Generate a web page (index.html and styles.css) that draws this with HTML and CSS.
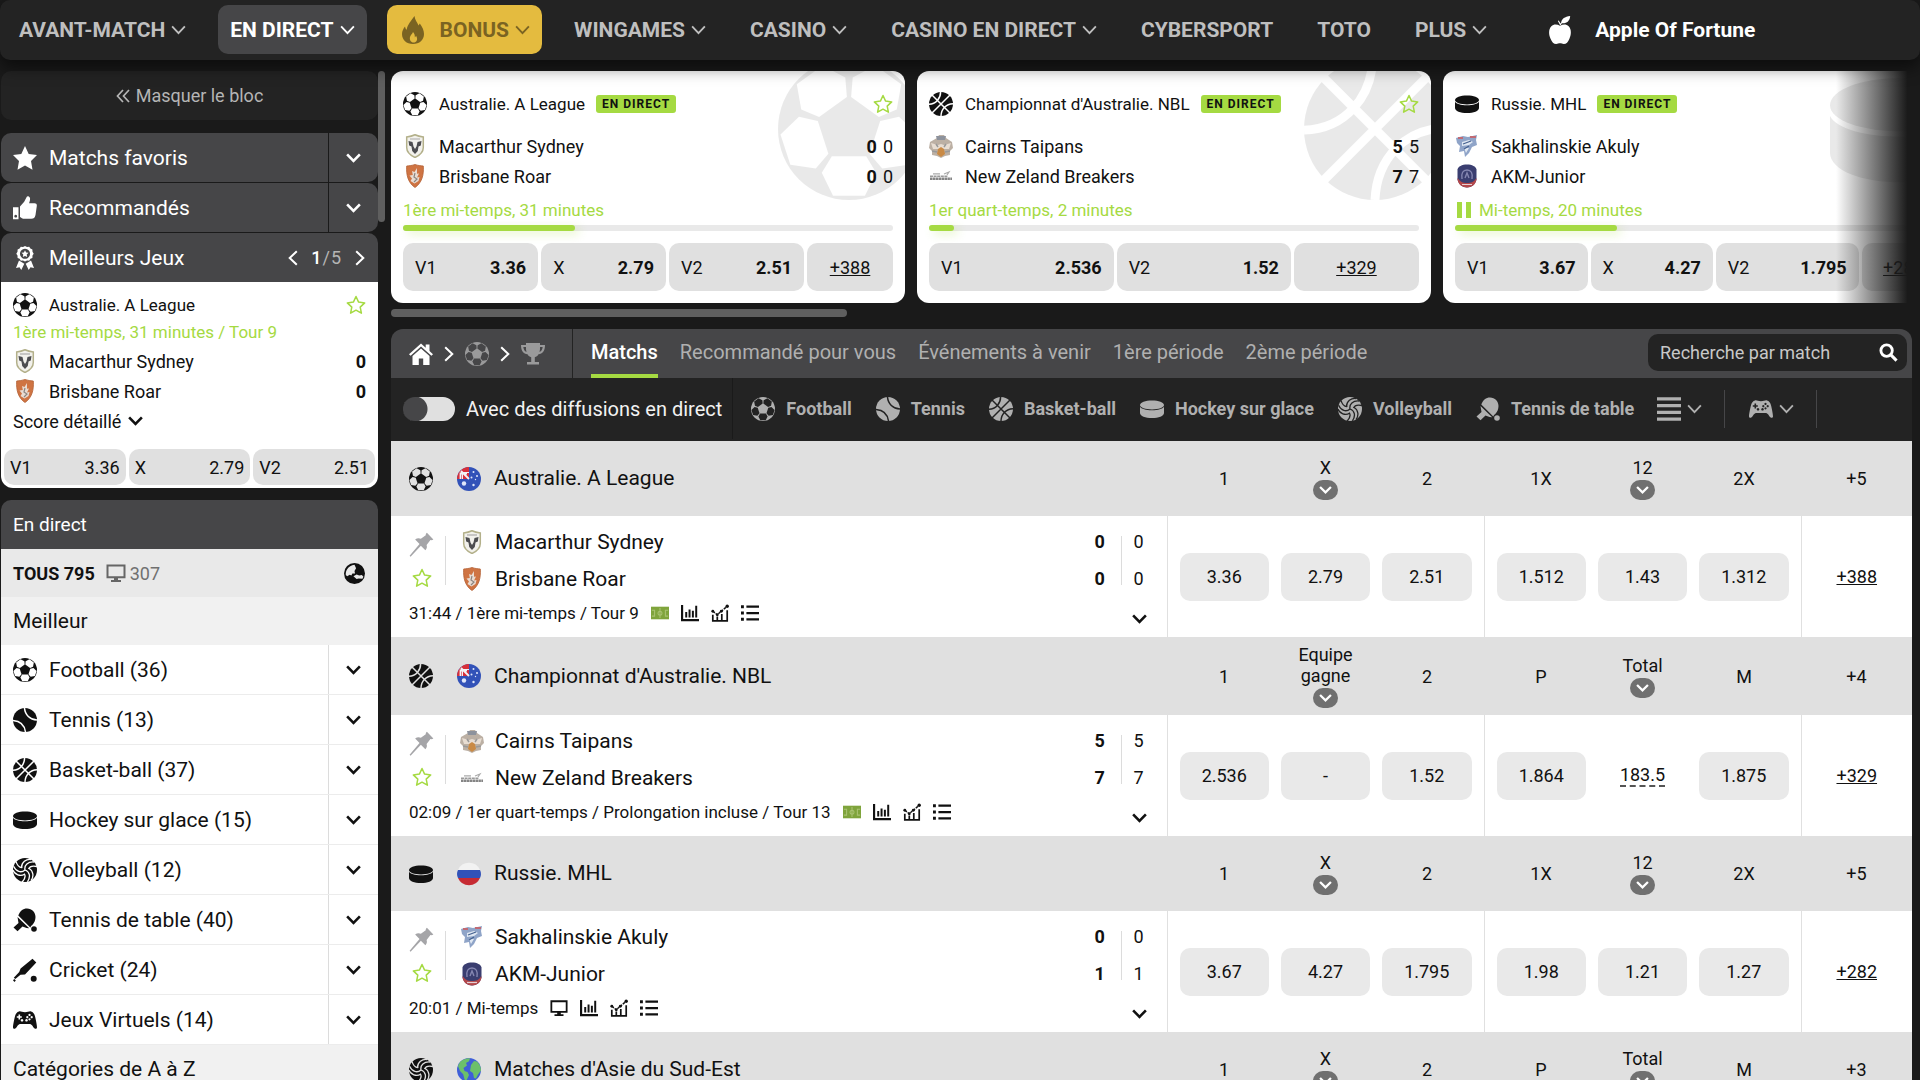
FILE: index.html
```html
<!DOCTYPE html>
<html lang="fr">
<head>
    <meta charset="UTF-8">
    <meta name="viewport" content="width=device-width, initial-scale=1">
    <title>Paris en direct</title>
    <link rel="stylesheet" href="styles.css">
</head>
<body>

<!-- Icon sprite -->
<svg class="sprite" width="0" height="0" aria-hidden="true">
    <mask id="m-football"><circle cx="12" cy="12" r="12" fill="#fff"/>
        <g fill="#000">
            <path d="M9.1 16.6h5.8l1.7 2.8-1.9 3.9H9.3l-1.9-3.9z"/>
            <path d="M9.1 16.6h5.8l1.7 2.8-1.9 3.9H9.3l-1.9-3.9z" transform="rotate(72 12 12)"/>
            <path d="M9.1 16.6h5.8l1.7 2.8-1.9 3.9H9.3l-1.9-3.9z" transform="rotate(144 12 12)"/>
            <path d="M9.1 16.6h5.8l1.7 2.8-1.9 3.9H9.3l-1.9-3.9z" transform="rotate(216 12 12)"/>
            <path d="M9.1 16.6h5.8l1.7 2.8-1.9 3.9H9.3l-1.9-3.9z" transform="rotate(288 12 12)"/>
        </g>
    </mask>
    <mask id="m-basket"><circle cx="12" cy="12" r="12" fill="#fff"/>
        <path d="M3 3l18 18M21 3L3 21M11.6 0C11.5 6.500 7 12 0 12.200M24 11.800C17 12 12.300 17 12 24" fill="none" stroke="#000" stroke-width="1.500"/>
    </mask>
    <mask id="m-tennis"><circle cx="12" cy="12" r="12" fill="#fff"/>
        <path d="M11.500 0C12 7 17 11.500 24 12M0 12.500C7 13 11.500 17 12.500 24" fill="none" stroke="#000" stroke-width="1.500"/>
    </mask>
    <mask id="m-volley"><circle cx="12" cy="12" r="12" fill="#fff"/>
        <g fill="none" stroke="#000" stroke-width="1.300">
            <path d="M12 12C11 7 15 3.500 21 4M8.500 9.500C8.500 4.500 13 .8 18 1.500M15.500 11C16.500 8.500 19.500 7.500 24 8.500"/>
            <path d="M12 12C11 7 15 3.500 21 4M8.500 9.500C8.500 4.500 13 .8 18 1.500M15.500 11C16.500 8.500 19.500 7.500 24 8.500" transform="rotate(120 12 12)"/>
            <path d="M12 12C11 7 15 3.500 21 4M8.500 9.500C8.500 4.500 13 .8 18 1.500M15.500 11C16.500 8.500 19.500 7.500 24 8.500" transform="rotate(240 12 12)"/>
        </g>
    </mask>
    <symbol id="football" viewBox="0 0 24 24"><rect width="24" height="24" fill="currentColor" mask="url(#m-football)"/></symbol>
    <symbol id="basket" viewBox="0 0 24 24"><rect width="24" height="24" fill="currentColor" mask="url(#m-basket)"/></symbol>
    <symbol id="tennis" viewBox="0 0 24 24"><rect width="24" height="24" fill="currentColor" mask="url(#m-tennis)"/></symbol>
    <symbol id="volley" viewBox="0 0 24 24"><rect width="24" height="24" fill="currentColor" mask="url(#m-volley)"/></symbol>
    <symbol id="puck" viewBox="0 0 24 24"><path d="M0 8c0-2.600 5.400-4.600 12-4.600S24 5.400 24 8s-5.400 4.400-12 4.400S0 10.600 0 8z" fill="currentColor"/><path d="M0 9.800c1.200 2.200 6 3.500 12 3.500s10.800-1.300 12-3.500V16c0 3-5.400 5-12 5S0 19 0 16z" fill="currentColor"/></symbol>
    <symbol id="paddle" viewBox="0 0 24 24"><path d="M5.300 7.500C7 3 10 .5 14 .5c5 0 8.500 3.600 8.500 8.600 0 3.200-1.200 6-3.200 8a4 4 0 0 0-2 2.400z" fill="currentColor"/><path d="M4.500 9l11.700 11.300-2.700-.3-4-1.500-5 4.700L.5 19.500l5-4.500z" fill="currentColor"/><circle cx="21" cy="21" r="2.800" fill="currentColor"/></symbol>
    <symbol id="cricket" viewBox="0 0 24 24"><path d="M19.500.8l3.800 3.800L12 16.500l-4.500.2L2.300 21 .8 19.800 6.200 14l1.400-3.600z" fill="currentColor"/><path d="M0 22.300l1.300-1.300 1.500 1.500L1.500 24z" fill="currentColor"/><circle cx="20.700" cy="20.700" r="3" fill="currentColor"/></symbol>
    <symbol id="gamepad" viewBox="0 0 24 24"><path fill-rule="evenodd" d="M6 3.500c1.500-.7 3 .8 6 .8s4.500-1.500 6-.8c2 .5 3.500 2 4.200 5.500.9 4 1.800 8.500 1.800 10.200 0 1.300-1 1.800-2 1.500-1.700-.6-3-4.700-5-4.700H7c-2 0-3.300 4.100-5 4.700-1 .3-2-.2-2-1.500C0 17.500.9 13 1.800 9 2.500 5.500 4 4 6 3.500zM5.500 6.500v1.700H3.800v1.600h1.700v1.700h1.600V9.800h1.700V8.200H7.100V6.500zM16.500 5.800a1.100 1.100 0 1 0 .01 0zM14.300 8a1.100 1.100 0 1 0 .01 0zM18.700 8a1.100 1.100 0 1 0 .01 0zM16.500 10.200a1.100 1.100 0 1 0 .01 0zM9 11a1.300 1.300 0 1 0 .01 0zM13.500 11a1.300 1.300 0 1 0 .01 0z" fill="currentColor"/></symbol>
    <symbol id="chev" viewBox="0 0 16 10"><path d="M1.200 1.200L8 8.300l6.800-7.100" fill="none" stroke="currentColor" stroke-width="2"/></symbol>
    <symbol id="chev-bold" viewBox="0 0 16 10"><path d="M1.200 1.200L8 8l6.800-6.800" fill="none" stroke="currentColor" stroke-width="2.800"/></symbol>
    <symbol id="chev-right" viewBox="0 0 10 16"><path d="M1.200 1.200L8.300 8l-7.100 6.800" fill="none" stroke="currentColor" stroke-width="2"/></symbol>
    <symbol id="chev-left" viewBox="0 0 10 16"><path d="M8.800 1.200L1.700 8l7.100 6.800" fill="none" stroke="currentColor" stroke-width="2"/></symbol>
    <symbol id="chev-double" viewBox="0 0 14 14"><path d="M7 1L1.500 7 7 13M13 1L7.500 7l5.500 6" fill="none" stroke="currentColor" stroke-width="1.700"/></symbol>
    <symbol id="star-o" viewBox="0 0 20 20"><path d="M10 1.500l2.600 5.600 6.100.8-4.500 4.200 1.200 6.100L10 15.200l-5.400 3 1.200-6.100L1.300 7.900l6.100-.8z" fill="none" stroke="currentColor" stroke-width="1.500" stroke-linejoin="round"/></symbol>
    <symbol id="star" viewBox="0 0 24 24"><path d="M12 0l3.700 7.900 8.300 1.100-6 5.900 1.500 8.800L12 19.500l-7.500 4.200L6 14.900 0 9l8.300-1.100z" fill="currentColor"/></symbol>
    <symbol id="thumb" viewBox="0 0 24 24"><path d="M7 10.500l4.200-4.700L13.800.8c.4-1 2.600-.6 3.100 1 .4 1.400 0 3-.8 5.400h5.400c1.800 0 2.500 1 2.300 2.800L22.500 19c-.6 2.700-1.800 3.800-4.200 3.800h-6.500c-2.500 0-3.600-1.300-4.800-1.900z" fill="currentColor"/><path fill-rule="evenodd" d="M0 11.200h5.500v12H0zM2.700 18.800a1.400 1.400 0 1 0 .01 0z" fill="currentColor"/></symbol>
    <symbol id="medal" viewBox="0 0 24 24"><path d="M6 14.500L3 22l3.500-.8L8.300 24l3-6.200zM18 14.500l3 7.500-3.500-.8-1.800 2.800-3-6.200z" fill="currentColor"/><path fill-rule="evenodd" d="M12 0l2 1 2.200-.3 1.200 1.900 2 .9.100 2.300 1.200 1.900-1.200 1.900-.1 2.300-2 .9-1.200 1.900-2.200-.3-2 1-2-1-2.200.3-1.200-1.900-2-.9-.1-2.300-1.200-1.900 1.200-1.900.1-2.300 2-.9L7.800.7 10 1zM12 2.800a5 5 0 1 0 .01 0z" fill="currentColor"/><path d="M12 4.200l1.100 2.300 2.400.3-1.800 1.800.5 2.500-2.200-1.200-2.200 1.200.5-2.500-1.800-1.800 2.400-.3z" fill="currentColor"/></symbol>
    <symbol id="flame" viewBox="0 0 22 28"><path fill-rule="evenodd" d="M12.500 0c.5 4 2.500 6 4 9.500l1.300-2C20.500 11 22 14.500 22 18c0 6-4.500 10-11 10S0 24 0 18c0-3 1.500-5.500 3-7.500.3 1.600.8 2.500 1.700 3.200C5.500 8.500 9 5 12.500 0zM11 16c-.8 2.200-2.500 3-3 5-.7 3 1 5.500 3.500 5.500s4-2 3.500-4.500c-.2-1-.6-1.700-1-2.300-.3.900-.7 1.300-1.200 1.600C13 19.500 12.500 17.500 11 16z" fill="currentColor"/></symbol>
    <symbol id="apple" viewBox="0 0 26 33"><path d="M13 11.500C9.500 9.500 5.500 9.300 2.800 12-.8 15.700-.3 22 2 27c1.500 3.500 3.500 6 6.500 6 1.800 0 2.800-.8 4.500-.8s2.700.8 4.500.8c3 0 5-2.500 6.500-6 2.300-5 2.800-11.300-.8-15-2.700-2.700-6.700-2.500-10.200-.5z" fill="currentColor"/><path d="M14.500 7.500C15 3 18.500 1 25 0c-.5 6-4 9-9.800 8.500l-1.400 2.300-.8-.3-2.500-4.700 1-.5 2.200 3.500z" fill="currentColor"/></symbol>
    <symbol id="home" viewBox="0 0 24 24"><path d="M12 1.500L0 12.200l1.600 1.600L12 4.600l10.400 9.200 1.600-1.600-3.500-3.200V2.500h-3.800v3.200z" fill="currentColor"/><path d="M12 6.500l-8.500 7.600V23h6.300v-6.500h4.400V23h6.300v-8.900z" fill="currentColor"/></symbol>
    <symbol id="trophy" viewBox="0 0 24 24"><path fill-rule="evenodd" d="M5 1h14v2h5c0 6-2.500 9-6.500 9.300-1 1.700-2.200 2.600-3.700 3V20H18v2.500H6V20h4.200v-4.700c-1.500-.4-2.700-1.300-3.700-3C2.500 12 0 9 0 3h5zM2.300 5c.4 2.700 1.300 4.300 3.200 5C5 8.300 4.900 6.800 5 5zM19 5c.1 1.800 0 3.300-.5 5 1.900-.7 2.800-2.300 3.200-5z" fill="currentColor"/></symbol>
    <symbol id="search" viewBox="0 0 20 20"><circle cx="8" cy="8" r="6" fill="none" stroke="currentColor" stroke-width="3"/><path d="M12.500 12.500l6 6" stroke="currentColor" stroke-width="3.200"/></symbol>
    <symbol id="lines" viewBox="0 0 24 24"><path d="M0 1.800h24M0 8.600h24M0 15.400h24M0 22.200h24" stroke="currentColor" stroke-width="3.200"/></symbol>
    <symbol id="monitor" viewBox="0 0 20 20"><path d="M1.500 2.500h17v11.800h-17z" fill="none" stroke="currentColor" stroke-width="2"/><path d="M8 14h4v3h3v2H5v-2h3z" fill="currentColor"/></symbol>
    <symbol id="pin" viewBox="0 0 24 24"><path d="M17.200.6l6.200 6.600c-1.200.8-2.200.7-2.800.5l-3.700 4.800c.6 1.900.3 3.500-1.200 5l-4.300-4.400L1.500 23.700l-.9-.9 9.500-11.300-4.200-4.300c1.700-1.300 3.700-1.500 5.500-.7l4.700-3.400c-.1-1 .2-1.900 1.100-2.500z" fill="currentColor"/></symbol>
    <symbol id="field" viewBox="0 0 20 20"><path d="M0 3h20v14H0z" fill="#7fa43c"/><path d="M10 4.500v11M10 8a2.200 2.200 0 1 0 .01 0M1 7h3v6.500H1M19 7h-3v6.500h3" fill="none" stroke="#a9c272" stroke-width="1.200"/></symbol>
    <symbol id="bars" viewBox="0 0 20 20"><path d="M1.200 1v17H20" fill="none" stroke="currentColor" stroke-width="2.400"/><path d="M5.800 9v6M9.500 6v9M13.200 7.500V15M16.900 2v13" stroke="currentColor" stroke-width="2.200"/></symbol>
    <symbol id="trend" viewBox="0 0 20 20"><path d="M2 8l5 4 4.500-4L18 2.500" fill="none" stroke="currentColor" stroke-width="1.500" stroke-dasharray="3 1"/><path d="M2 12v6.800h16V7M7 14v5M12 11v8" fill="none" stroke="currentColor" stroke-width="1.900"/><circle cx="2" cy="8" r="1.600" fill="currentColor"/><circle cx="7" cy="12" r="1.600" fill="currentColor"/><circle cx="11.500" cy="8" r="1.600" fill="currentColor"/><circle cx="18" cy="2.500" r="1.900" fill="currentColor"/></symbol>
    <symbol id="list" viewBox="0 0 20 20"><path d="M0 3h3.200M0 10h3.200M0 17h3.200" stroke="currentColor" stroke-width="3.200"/><path d="M6 3h14M6 10h14M6 17h14" stroke="currentColor" stroke-width="2.500"/></symbol>
    <symbol id="globe" viewBox="0 0 20 20"><circle cx="10" cy="10" r="10" fill="currentColor"/><path d="M3 6C4.500 3.500 7 1.800 10 1.600L11.500 5 10 7.500l.5 2.500H8l-1 2-1.500-.8L3 12.500l-1.300-1C1.500 9.500 2 7.500 3 6zM9 12.500l3-1.500 2.500 1 2.500-.5 1.500 1.500-1 2-3.500-.3-2 .6z" fill="#e9e9e9"/></symbol>
    <symbol id="au" viewBox="0 0 24 24"><circle cx="12" cy="12" r="12" fill="#3252b8"/><path d="M12 0v12H0C0 6 5 0 12 0z" fill="#d8303a"/><path d="M4 4l8 8M3.500 12V6.500H10" stroke="#f2f2f5" stroke-width="1.800" fill="none"/><path d="M6 5.500h6M5.500 5v7" stroke="#f2f2f5" stroke-width="1"/><g fill="#dfe6fa"><circle cx="7" cy="16.500" r="2.200"/><circle cx="16.500" cy="5" r="1"/><circle cx="20" cy="9" r="1"/><circle cx="14.500" cy="10.500" r="1"/><circle cx="18.500" cy="12.500" r=".7"/><circle cx="16.500" cy="18" r="1.200"/></g></symbol>
    <symbol id="ru" viewBox="0 0 24 24"><path d="M1 8a12 12 0 0 1 22 0z" fill="#f2f2f2"/><path d="M1 8h22c1.300 2.700 1.300 5.300 0 8H1c-1.300-2.700-1.300-5.300 0-8z" fill="#3252b8"/><path d="M1 16h22a12 12 0 0 1-22 0z" fill="#c62b33"/></symbol>
    <symbol id="world" viewBox="0 0 24 24"><circle cx="12" cy="12" r="12" fill="#3f5fd8"/><path d="M3 4c3-3 7-4 10-3.800l-1 3L9 5l1 2.500L6.500 10l1 3 3 1 1.500 3-3 6.500C7 22 7 18 6 16l-3-3L1 8zM14 7l3-4 3 .5c3 3 4 6 4 9l-3 4-2 4-2-.5-1-5-3-2z" fill="#6cc06a"/></symbol>
    <symbol id="t-mac" viewBox="0 0 24 24"><path d="M12 .8c3 1.400 5.700 1.900 8.300 2.200v10.500c0 4.500-3.600 7.800-8.300 10-4.700-2.200-8.300-5.500-8.300-10V3C6.300 2.700 9 2.200 12 .8z" fill="#f2f1ec" stroke="#b3b08a" stroke-width="1.500"/><path d="M5.500 7l4 1 1 4.500L12 15l1.500-2.500 1-4.500 4-1-.7 4.500-2.300 1-.7 4.500L12 20l-2.800-3-.7-4.500-2.300-1z" fill="#4d4d50"/><path d="M7 5h10" stroke="#aaa" stroke-width="1.200"/></symbol>
    <symbol id="t-bri" viewBox="0 0 24 24"><path d="M12 .5c3 1 5.500 1.300 8.300 1.500.7 9-1.500 17-8.300 21.500C5.200 19 3 11 3.700 2c2.800-.2 5.300-.5 8.300-1.500z" fill="#cf7443" stroke="#b35f33" stroke-width=".8"/><path d="M14 4l-2.500 4L9 7l.8 4-3.300.5L9 14.500 7.500 17l4 2.500 4-2.500 1-4-2.500.5 2-4-2 .2z" fill="#e9dcd2"/><path d="M12 9l-1 4 3 2-3 3" stroke="#8c8580" stroke-width="1.200" fill="none"/></symbol>
    <symbol id="t-cai" viewBox="0 0 24 24"><path d="M8 4l2-3h5l2 3 6 4 1 6-3 3v4l-5 1-4 2-4-2-5-1v-4l-3-3 1-6z" fill="#bcb0a4"/><path d="M7 2h10l-1 4H8z" fill="#8d929c"/><path d="M2 9l7 2 3-1 3 1 7-2-2 6H4z" fill="#e8ddd2"/><path d="M9 15l3-2 3 2 1 5-4 3-4-3z" fill="#c98a45"/><path d="M3 17l5 1M21 17l-5 1M7 10l2 3M17 10l-2 3" stroke="#999" stroke-width="1.500"/></symbol>
    <symbol id="t-nzb" viewBox="0 0 24 24"><path d="M4 9.800h7M15 10l5-2-2 3" stroke="#aaa" stroke-width="1.200" fill="none"/><path d="M1 12.300h18" stroke="#9a9a9a" stroke-width="1.500" stroke-dasharray="3 .6"/><path d="M1 14.700h22" stroke="#858585" stroke-width="2.600" stroke-dasharray="2.500 .4"/></symbol>
    <symbol id="t-sak" viewBox="0 0 24 24"><path d="M1 4l7-2 5 1 9-2-1 5 1 5-5 2-3 6-4 4-1-6-5 1 1-6-3-3z" fill="#8fa4c8"/><path d="M7 8l7-2 4 2-4 3-7 1zM9 14l5 0-3 5z" fill="#dfe7f2"/><path d="M3 4l5 0M15 3l6 0" stroke="#c06a74" stroke-width="2"/><path d="M8 10l8-3M9 15l5-3" stroke="#43608f" stroke-width="1.200"/></symbol>
    <symbol id="t-akm" viewBox="0 0 24 24"><path d="M12 .5c5 0 9 2 9.500 5v10c-1 5-5 8-9.500 8s-8.500-3-9.500-8v-10C3 2.500 7 .5 12 .5z" fill="#3a3e70"/><path d="M2.500 14c3 4 5 5 9.500 5s7-1 9.500-5c0 6-4.500 9.500-9.500 9.500S2.500 20 2.500 14z" fill="#b5474a"/><path d="M7 15c-1-6 1-9 5-9s6 3 5 9M10 14l2-5 2 5" stroke="#8486b0" stroke-width="1.400" fill="none"/><path d="M7 20.500h10" stroke="#e5cfd2" stroke-width="1.200"/></symbol>
</svg>

<header class="topbar">
    <nav class="topnav">
        <a class="topnav-link" href="#">AVANT-MATCH <svg class="chev"><use href="#chev"/></svg></a>
        <a class="topnav-link active" href="#">EN DIRECT <svg class="chev"><use href="#chev"/></svg></a>
        <a class="topnav-link bonus" href="#"><svg class="flame"><use href="#flame"/></svg>BONUS <svg class="chev"><use href="#chev"/></svg></a>
        <a class="topnav-link" href="#">WINGAMES <svg class="chev"><use href="#chev"/></svg></a>
        <a class="topnav-link" href="#">CASINO <svg class="chev"><use href="#chev"/></svg></a>
        <a class="topnav-link" href="#">CASINO EN DIRECT <svg class="chev"><use href="#chev"/></svg></a>
        <a class="topnav-link" href="#">CYBERSPORT</a>
        <a class="topnav-link" href="#">TOTO</a>
        <a class="topnav-link" href="#">PLUS <svg class="chev"><use href="#chev"/></svg></a>
        <a class="topnav-link apple" href="#"><svg class="apple-icon"><use href="#apple"/></svg>Apple Of Fortune</a>
    </nav>
</header>

<div class="page">
    <!-- Left column -->
    <aside class="sidebar">
        <button class="hide-btn" type="button"><svg><use href="#chev-double"/></svg>Masquer le bloc</button>

        <div class="side-menu">
            <div class="side-head">
                <a class="side-head-link" href="#"><svg class="icon"><use href="#star"/></svg>Matchs favoris</a>
                <button class="side-toggle" type="button" aria-label="Ouvrir les matchs favoris"><svg class="chev"><use href="#chev-bold"/></svg></button>
            </div>
            <div class="side-head">
                <a class="side-head-link" href="#"><svg class="icon"><use href="#thumb"/></svg>Recommandés</a>
                <button class="side-toggle" type="button" aria-label="Ouvrir les recommandés"><svg class="chev"><use href="#chev-bold"/></svg></button>
            </div>
            <div class="side-head best">
                <a class="side-head-link" href="#"><svg class="icon"><use href="#medal"/></svg>Meilleurs Jeux</a>
                <div class="pager">
                    <button type="button" aria-label="Précédent"><svg class="chev-side"><use href="#chev-left"/></svg></button>
                    <span class="pager-num"><b>1</b>/5</span>
                    <button type="button" aria-label="Suivant"><svg class="chev-side"><use href="#chev-right"/></svg></button>
                </div>
            </div>
            <div class="best-game">
                <div class="best-row best-league"><svg class="icon"><use href="#football"/></svg><span>Australie. A League</span>
                    <button class="fav" type="button" aria-label="Favori"><svg><use href="#star-o"/></svg></button></div>
                <div class="best-time">1ère mi-temps, 31 minutes / Tour 9</div>
                <div class="best-row"><svg class="icon"><use href="#t-mac"/></svg><span>Macarthur Sydney</span><b>0</b></div>
                <div class="best-row"><svg class="icon"><use href="#t-bri"/></svg><span>Brisbane Roar</span><b>0</b></div>
                <button class="detail-btn" type="button">Score détaillé <svg class="chev-small"><use href="#chev-bold"/></svg></button>
                <div class="best-odds">
                    <button type="button"><span>V1</span><span>3.36</span></button>
                    <button type="button"><span>X</span><span>2.79</span></button>
                    <button type="button"><span>V2</span><span>2.51</span></button>
                </div>
            </div>
        </div>

        <div class="live-panel">
            <h2 class="live-title">En direct</h2>
            <div class="live-all"><b>TOUS 795</b><svg class="tv"><use href="#monitor"/></svg><span class="tv-count">307</span><svg class="globe"><use href="#globe"/></svg></div>
            <h3 class="live-sub">Meilleur</h3>
            <ul class="sports">
                <li><a href="#"><svg class="icon"><use href="#football"/></svg>Football (36)</a><button type="button" aria-label="Football"><svg class="chev-small"><use href="#chev-bold"/></svg></button></li>
                <li><a href="#"><svg class="icon"><use href="#tennis"/></svg>Tennis (13)</a><button type="button" aria-label="Tennis"><svg class="chev-small"><use href="#chev-bold"/></svg></button></li>
                <li><a href="#"><svg class="icon"><use href="#basket"/></svg>Basket-ball (37)</a><button type="button" aria-label="Basket-ball"><svg class="chev-small"><use href="#chev-bold"/></svg></button></li>
                <li><a href="#"><svg class="icon"><use href="#puck"/></svg>Hockey sur glace (15)</a><button type="button" aria-label="Hockey sur glace"><svg class="chev-small"><use href="#chev-bold"/></svg></button></li>
                <li><a href="#"><svg class="icon"><use href="#volley"/></svg>Volleyball (12)</a><button type="button" aria-label="Volleyball"><svg class="chev-small"><use href="#chev-bold"/></svg></button></li>
                <li><a href="#"><svg class="icon"><use href="#paddle"/></svg>Tennis de table (40)</a><button type="button" aria-label="Tennis de table"><svg class="chev-small"><use href="#chev-bold"/></svg></button></li>
                <li><a href="#"><svg class="icon"><use href="#cricket"/></svg>Cricket (24)</a><button type="button" aria-label="Cricket"><svg class="chev-small"><use href="#chev-bold"/></svg></button></li>
                <li><a href="#"><svg class="icon"><use href="#gamepad"/></svg>Jeux Virtuels (14)</a><button type="button" aria-label="Jeux Virtuels"><svg class="chev-small"><use href="#chev-bold"/></svg></button></li>
            </ul>
            <h3 class="live-sub">Catégories de A à Z</h3>
        </div>
    </aside>
    <div class="side-scroll"></div>

    <!-- Main column -->
    <main class="content">
        <section class="carousel">
            <article class="card">
                <svg class="card-bg"><use href="#football"/></svg>
                <div class="card-league"><svg class="icon"><use href="#football"/></svg><span>Australie. A League</span><em class="badge">EN DIRECT</em>
                    <button class="fav" type="button" aria-label="Favori"><svg><use href="#star-o"/></svg></button></div>
                <div class="card-teams">
                    <div class="card-team"><svg class="icon"><use href="#t-mac"/></svg><span>Macarthur Sydney</span><b>0</b><i>0</i></div>
                    <div class="card-team"><svg class="icon"><use href="#t-bri"/></svg><span>Brisbane Roar</span><b>0</b><i>0</i></div>
                </div>
                <div class="card-time">1ère mi-temps, 31 minutes</div>
                <div class="progress"><div class="progress-fill" style="width: 35%"></div></div>
                <div class="card-odds">
                    <button type="button"><span>V1</span><b>3.36</b></button>
                    <button type="button"><span>X</span><b>2.79</b></button>
                    <button type="button"><span>V2</span><b>2.51</b></button>
                    <a href="#">+388</a>
                </div>
            </article>
            <article class="card">
                <svg class="card-bg"><use href="#basket"/></svg>
                <div class="card-league"><svg class="icon"><use href="#basket"/></svg><span>Championnat d'Australie. NBL</span><em class="badge">EN DIRECT</em>
                    <button class="fav" type="button" aria-label="Favori"><svg><use href="#star-o"/></svg></button></div>
                <div class="card-teams">
                    <div class="card-team"><svg class="icon"><use href="#t-cai"/></svg><span>Cairns Taipans</span><b>5</b><i>5</i></div>
                    <div class="card-team"><svg class="icon"><use href="#t-nzb"/></svg><span>New Zeland Breakers</span><b>7</b><i>7</i></div>
                </div>
                <div class="card-time">1er quart-temps, 2 minutes</div>
                <div class="progress"><div class="progress-fill" style="width: 5%"></div></div>
                <div class="card-odds">
                    <button type="button"><span>V1</span><b>2.536</b></button>
                    <button type="button"><span>V2</span><b>1.52</b></button>
                    <a href="#">+329</a>
                </div>
            </article>
            <article class="card">
                <svg class="card-bg"><use href="#puck"/></svg>
                <div class="card-league"><svg class="icon"><use href="#puck"/></svg><span>Russie. MHL</span><em class="badge">EN DIRECT</em></div>
                <div class="card-teams">
                    <div class="card-team"><svg class="icon"><use href="#t-sak"/></svg><span>Sakhalinskie Akuly</span></div>
                    <div class="card-team"><svg class="icon"><use href="#t-akm"/></svg><span>AKM-Junior</span></div>
                </div>
                <div class="card-time"><span class="pause"></span>Mi-temps, 20 minutes</div>
                <div class="progress"><div class="progress-fill" style="width: 33%"></div></div>
                <div class="card-odds">
                    <button type="button"><span>V1</span><b>3.67</b></button>
                    <button type="button"><span>X</span><b>4.27</b></button>
                    <button type="button"><span>V2</span><b>1.795</b></button>
                    <a href="#">+282</a>
                </div>
            </article>
        </section>
        <div class="carousel-scroll"></div>

        <section class="board">
            <div class="tabs-bar">
                <div class="crumbs">
                    <a class="on" href="#" aria-label="Accueil"><svg class="icon"><use href="#home"/></svg></a>
                    <svg class="chev-side"><use href="#chev-right"/></svg>
                    <a href="#" aria-label="Football"><svg class="icon"><use href="#football"/></svg></a>
                    <svg class="chev-side"><use href="#chev-right"/></svg>
                    <a href="#" aria-label="Championnats"><svg class="icon"><use href="#trophy"/></svg></a>
                </div>
                <nav class="tabs">
                    <a class="active" href="#">Matchs</a>
                    <a href="#">Recommandé pour vous</a>
                    <a href="#">Événements à venir</a>
                    <a href="#">1ère période</a>
                    <a href="#">2ème période</a>
                </nav>
                <form class="search">
                    <input type="text" placeholder="Recherche par match" aria-label="Recherche par match">
                    <button type="submit" aria-label="Rechercher"><svg><use href="#search"/></svg></button>
                </form>
            </div>

            <div class="filter-bar">
                <label class="stream"><input type="checkbox" class="switch">Avec des diffusions en direct</label>
                <nav class="filters">
                    <a href="#"><svg class="icon"><use href="#football"/></svg>Football</a>
                    <a href="#"><svg class="icon"><use href="#tennis"/></svg>Tennis</a>
                    <a href="#"><svg class="icon"><use href="#basket"/></svg>Basket-ball</a>
                    <a href="#"><svg class="icon"><use href="#puck"/></svg>Hockey sur glace</a>
                    <a href="#"><svg class="icon"><use href="#volley"/></svg>Volleyball</a>
                    <a href="#"><svg class="icon"><use href="#paddle"/></svg>Tennis de table</a>
                </nav>
                <button class="filter-more" type="button" aria-label="Plus de sports"><svg class="icon"><use href="#lines"/></svg><svg class="chev"><use href="#chev"/></svg></button>
                <button class="filter-more" type="button" aria-label="Jeux virtuels"><svg class="icon"><use href="#gamepad"/></svg><svg class="chev"><use href="#chev"/></svg></button>
            </div>

            <table class="matches">
                <colgroup>
                    <col>
                    <col class="c-out"><col class="c-mid"><col class="c-out">
                    <col class="c-out"><col class="c-mid"><col class="c-out">
                    <col class="c-more">
                </colgroup>
                <tbody>
                    <tr class="league">
                        <th><div class="league-name"><svg class="icon"><use href="#football"/></svg><svg class="icon"><use href="#au"/></svg><a href="#">Australie. A League</a></div></th>
                        <th class="first">1</th><th>X<button class="drop" type="button" aria-label="Choisir"><svg><use href="#chev-bold"/></svg></button></th><th class="last">2</th>
                        <th class="first">1X</th><th>12<button class="drop" type="button" aria-label="Choisir"><svg><use href="#chev-bold"/></svg></button></th><th class="last">2X</th>
                        <th>+5</th>
                    </tr>
                    <tr class="match">
                        <td>
                            <div class="match-info">
                                <div class="marks"><button type="button" aria-label="Épingler"><svg class="pin"><use href="#pin"/></svg></button><button class="fav" type="button" aria-label="Favori"><svg><use href="#star-o"/></svg></button></div>
                                <span class="bar"></span>
                                <div class="teams">
                                    <a href="#"><svg class="icon"><use href="#t-mac"/></svg>Macarthur Sydney</a>
                                    <a href="#"><svg class="icon"><use href="#t-bri"/></svg>Brisbane Roar</a>
                                </div>
                                <div class="score"><b>0</b><b>0</b></div>
                                <span class="bar"></span>
                                <div class="score"><span>0</span><span>0</span></div>
                            </div>
                            <div class="meta"><span>31:44 / 1ère mi-temps / Tour 9</span><svg><use href="#field"/></svg><svg><use href="#bars"/></svg><svg><use href="#trend"/></svg><svg><use href="#list"/></svg>
                                <button type="button" aria-label="Détails"><svg class="chev-small"><use href="#chev-bold"/></svg></button></div>
                        </td>
                        <td class="first"><button class="odd" type="button">3.36</button></td><td><button class="odd" type="button">2.79</button></td><td class="last"><button class="odd" type="button">2.51</button></td>
                        <td class="first"><button class="odd" type="button">1.512</button></td><td><button class="odd" type="button">1.43</button></td><td class="last"><button class="odd" type="button">1.312</button></td>
                        <td class="more"><a href="#">+388</a></td>
                    </tr>
                    <tr class="league">
                        <th><div class="league-name"><svg class="icon"><use href="#basket"/></svg><svg class="icon"><use href="#au"/></svg><a href="#">Championnat d'Australie. NBL</a></div></th>
                        <th class="first">1</th><th>Equipe gagne<button class="drop" type="button" aria-label="Choisir"><svg><use href="#chev-bold"/></svg></button></th><th class="last">2</th>
                        <th class="first">P</th><th>Total<button class="drop" type="button" aria-label="Choisir"><svg><use href="#chev-bold"/></svg></button></th><th class="last">M</th>
                        <th>+4</th>
                    </tr>
                    <tr class="match">
                        <td>
                            <div class="match-info">
                                <div class="marks"><button type="button" aria-label="Épingler"><svg class="pin"><use href="#pin"/></svg></button><button class="fav" type="button" aria-label="Favori"><svg><use href="#star-o"/></svg></button></div>
                                <span class="bar"></span>
                                <div class="teams">
                                    <a href="#"><svg class="icon"><use href="#t-cai"/></svg>Cairns Taipans</a>
                                    <a href="#"><svg class="icon"><use href="#t-nzb"/></svg>New Zeland Breakers</a>
                                </div>
                                <div class="score"><b>5</b><b>7</b></div>
                                <span class="bar"></span>
                                <div class="score"><span>5</span><span>7</span></div>
                            </div>
                            <div class="meta"><span>02:09 / 1er quart-temps / Prolongation incluse / Tour 13</span><svg><use href="#field"/></svg><svg><use href="#bars"/></svg><svg><use href="#trend"/></svg><svg><use href="#list"/></svg>
                                <button type="button" aria-label="Détails"><svg class="chev-small"><use href="#chev-bold"/></svg></button></div>
                        </td>
                        <td class="first"><button class="odd" type="button">2.536</button></td><td><button class="odd" type="button">-</button></td><td class="last"><button class="odd" type="button">1.52</button></td>
                        <td class="first"><button class="odd" type="button">1.864</button></td><td><button class="total" type="button">183.5</button></td><td class="last"><button class="odd" type="button">1.875</button></td>
                        <td class="more"><a href="#">+329</a></td>
                    </tr>
                    <tr class="league">
                        <th><div class="league-name"><svg class="icon"><use href="#puck"/></svg><svg class="icon"><use href="#ru"/></svg><a href="#">Russie. MHL</a></div></th>
                        <th class="first">1</th><th>X<button class="drop" type="button" aria-label="Choisir"><svg><use href="#chev-bold"/></svg></button></th><th class="last">2</th>
                        <th class="first">1X</th><th>12<button class="drop" type="button" aria-label="Choisir"><svg><use href="#chev-bold"/></svg></button></th><th class="last">2X</th>
                        <th>+5</th>
                    </tr>
                    <tr class="match">
                        <td>
                            <div class="match-info">
                                <div class="marks"><button type="button" aria-label="Épingler"><svg class="pin"><use href="#pin"/></svg></button><button class="fav" type="button" aria-label="Favori"><svg><use href="#star-o"/></svg></button></div>
                                <span class="bar"></span>
                                <div class="teams">
                                    <a href="#"><svg class="icon"><use href="#t-sak"/></svg>Sakhalinskie Akuly</a>
                                    <a href="#"><svg class="icon"><use href="#t-akm"/></svg>AKM-Junior</a>
                                </div>
                                <div class="score"><b>0</b><b>1</b></div>
                                <span class="bar"></span>
                                <div class="score"><span>0</span><span>1</span></div>
                            </div>
                            <div class="meta"><span>20:01 / Mi-temps</span><svg><use href="#monitor"/></svg><svg><use href="#bars"/></svg><svg><use href="#trend"/></svg><svg><use href="#list"/></svg>
                                <button type="button" aria-label="Détails"><svg class="chev-small"><use href="#chev-bold"/></svg></button></div>
                        </td>
                        <td class="first"><button class="odd" type="button">3.67</button></td><td><button class="odd" type="button">4.27</button></td><td class="last"><button class="odd" type="button">1.795</button></td>
                        <td class="first"><button class="odd" type="button">1.98</button></td><td><button class="odd" type="button">1.21</button></td><td class="last"><button class="odd" type="button">1.27</button></td>
                        <td class="more"><a href="#">+282</a></td>
                    </tr>
                    <tr class="league">
                        <th><div class="league-name"><svg class="icon"><use href="#volley"/></svg><svg class="icon"><use href="#world"/></svg><a href="#">Matches d'Asie du Sud-Est</a></div></th>
                        <th class="first">1</th><th>X<button class="drop" type="button" aria-label="Choisir"><svg><use href="#chev-bold"/></svg></button></th><th class="last">2</th>
                        <th class="first">P</th><th>Total<button class="drop" type="button" aria-label="Choisir"><svg><use href="#chev-bold"/></svg></button></th><th class="last">M</th>
                        <th>+3</th>
                    </tr>
                </tbody>
            </table>
        </section>
    </main>
</div>

</body>
</html>
```
FILE: styles.css
```css
* {
    box-sizing: border-box;
}

body {
    margin: 0;
    height: 100vh;
    overflow: hidden;
    display: flex;
    flex-direction: column;
    background: #1a1a1a;
    color: #111;
    font-family: Roboto, "Liberation Sans", sans-serif;
    font-size: 18px;
}

a {
    color: inherit;
    text-decoration: none;
}

button {
    font: inherit;
    color: inherit;
    background: none;
    border: 0;
    padding: 0;
    cursor: pointer;
}

h2, h3, ul {
    margin: 0;
    padding: 0;
    font-weight: 400;
    list-style: none;
}

svg {
    display: block;
    flex: none;
}

.sprite {
    position: absolute;
}

.icon {
    width: 24px;
    height: 24px;
}

.chev {
    width: 15px;
    height: 10px;
}

.chev-small {
    width: 15px;
    height: 10px;
}

.chev-side {
    width: 10px;
    height: 16px;
}

.fav {
    color: #a5da42;
}

.fav svg {
    width: 20px;
    height: 20px;
}

/* Top bar */
.topbar {
    position: relative;
    z-index: 2;
    flex: none;
    height: 60px;
    background: #232323;
    border-radius: 10px;
    box-shadow: 0 8px 16px rgba(0, 0, 0, 0.5);
}

.topnav {
    display: flex;
    gap: 20px;
    padding: 5px 7px;
}

.topnav-link {
    display: flex;
    align-items: center;
    gap: 6px;
    height: 49px;
    padding: 0 12px;
    border-radius: 10px;
    color: #bfbfbf;
    font-size: 21px;
    font-weight: 700;
    line-height: 48px;
    white-space: nowrap;
}

.topnav-link.active {
    background: #464648;
    color: #fff;
}

.topnav-link.bonus {
    background: #e4bb3f;
    color: #7a6322;
}

.flame {
    width: 22px;
    height: 32px;
    margin: 0 10px 0 3px;
}

.topnav-link.apple {
    margin-left: 16px;
    gap: 22px;
    color: #fff;
}

.apple-icon {
    width: 26px;
    height: 28px;
}

/* Page columns */
.page {
    display: flex;
    flex: 1;
    min-height: 0;
    padding: 11px 8px 0 1px;
}

.sidebar {
    flex: none;
    width: 377px;
    overflow: hidden;
}

.side-scroll {
    flex: none;
    width: 7px;
    height: 151px;
    border-radius: 4px;
    background: #5f5f5f;
}

.content {
    flex: 1;
    min-width: 0;
    margin-left: 6px;
    overflow: hidden;
}

/* Sidebar */
.hide-btn {
    display: flex;
    align-items: center;
    justify-content: center;
    gap: 6px;
    width: 100%;
    height: 49px;
    margin-bottom: 13px;
    border-radius: 10px;
    background: #232323;
    color: #b5b5b5;
}

.hide-btn svg {
    width: 14px;
    height: 14px;
}

.side-head {
    display: flex;
    height: 49px;
    margin-bottom: 1px;
    border-radius: 10px;
    background: #464648;
    color: #fff;
    font-size: 21px;
}

.side-head.best {
    margin-bottom: 0;
    border-radius: 10px 10px 0 0;
}

.side-head-link {
    display: flex;
    flex: 1;
    align-items: center;
    gap: 12px;
    padding-left: 12px;
}

.side-toggle {
    display: flex;
    align-items: center;
    justify-content: center;
    width: 50px;
    border-left: 1px solid #1a1a1a;
}

.pager {
    display: flex;
    align-items: center;
    gap: 13px;
    padding-right: 13px;
    color: #fff;
    font-size: 18px;
}

.pager-num {
    color: #b5b5b5;
    letter-spacing: 1px;
}

.pager-num b {
    color: #fff;
    font-weight: 500;
}

.best-game {
    padding: 10px 3px 3px;
    border-radius: 0 0 12px 12px;
    background: #fff;
}

.best-row {
    display: flex;
    align-items: center;
    gap: 12px;
    height: 30px;
    padding: 0 9px;
}

.best-row span {
    flex: 1;
}

.best-league {
    height: 26px;
    font-size: 17px;
}

.best-time {
    height: 28px;
    padding: 0 9px;
    color: #a5da42;
    font-size: 17px;
    line-height: 28px;
}

.detail-btn {
    display: flex;
    align-items: center;
    gap: 7px;
    height: 30px;
    padding: 0 9px;
}

.best-odds {
    display: flex;
    gap: 3px;
    margin-top: 13px;
}

.best-odds button {
    display: flex;
    flex: 1;
    align-items: center;
    justify-content: space-between;
    height: 36px;
    padding: 0 6px;
    border-radius: 10px;
    background: #e0e0e0;
}

.live-panel {
    margin-top: 12px;
}

.live-title {
    height: 49px;
    padding-left: 12px;
    border-radius: 10px 10px 0 0;
    background: #464648;
    color: #fff;
    font-size: 19px;
    line-height: 49px;
}

.live-all {
    display: flex;
    align-items: center;
    height: 48px;
    padding: 0 13px 0 12px;
    background: #e9e9e9;
}

.tv {
    width: 20px;
    height: 20px;
    margin: 0 4px 0 11px;
    color: #666;
}

.tv-count {
    flex: 1;
    color: #707070;
}

.globe {
    width: 21px;
    height: 21px;
}

.live-sub {
    height: 48px;
    padding-left: 12px;
    background: #f1f1f1;
    font-size: 21px;
    line-height: 48px;
}

.sports li {
    display: flex;
    height: 50px;
    border-bottom: 1px solid #ececec;
    background: #fff;
    font-size: 21px;
}

.sports a {
    display: flex;
    flex: 1;
    align-items: center;
    gap: 12px;
    padding-left: 12px;
}

.sports button {
    display: flex;
    align-items: center;
    justify-content: center;
    width: 50px;
    border-left: 1px solid #dcdcdc;
}

/* Cards */
.carousel {
    position: relative;
    display: flex;
    gap: 12px;
    height: 232px;
    overflow: hidden;
}

.carousel::after {
    content: "";
    position: absolute;
    top: 0;
    right: 0;
    width: 76px;
    height: 100%;
    background: linear-gradient(to right, rgba(26, 26, 26, 0), #1a1a1a 94%);
}

.card {
    position: relative;
    z-index: 0;
    flex: 0 0 514px;
    padding: 19px 12px 12px;
    border-radius: 12px;
    background: #fff;
    overflow: hidden;
}

.card-bg {
    position: absolute;
    z-index: -1;
    top: -13px;
    right: -15px;
    width: 142px;
    height: 142px;
    color: #e9e9e9;
}

.card-league {
    display: flex;
    align-items: center;
    height: 27px;
    font-size: 17px;
}

.card-league span {
    margin: 0 11px 0 12px;
}

.card-league .fav {
    margin-left: auto;
}

.badge {
    padding: 0 6px;
    border-radius: 3px;
    background: #a5da42;
    font-size: 12px;
    font-style: normal;
    font-weight: 700;
    letter-spacing: 1px;
    line-height: 18px;
}

.card-teams {
    padding-top: 14px;
}

.card-team {
    display: flex;
    align-items: center;
    height: 30px;
}

.card-team span {
    flex: 1;
    margin-left: 12px;
}

.card-team i {
    margin-left: 6px;
    font-style: normal;
}

.card-time {
    display: flex;
    align-items: center;
    height: 34px;
    padding-top: 4px;
    color: #a5da42;
    font-size: 17px;
}

.pause {
    width: 14px;
    height: 16px;
    margin: 0 8px 0 2px;
    border-right: 5px solid #a5da42;
    border-left: 5px solid #a5da42;
}

.progress {
    height: 6px;
    border-radius: 3px;
    background: #e9e9e9;
}

.progress-fill {
    height: 6px;
    border-radius: 3px;
    background: #a5da42;
    box-shadow: 4px 3px 10px rgba(165, 218, 66, 0.3);
}

.card-odds {
    display: flex;
    gap: 3px;
    margin-top: 12px;
}

.card-odds button,
.card-odds a {
    display: flex;
    flex: 1 1 auto;
    align-items: center;
    justify-content: space-between;
    gap: 32px;
    height: 48px;
    padding: 0 12px;
    border-radius: 10px;
    background: #e0e0e0;
}

.card-odds a {
    justify-content: center;
    text-decoration: underline;
}

.carousel-scroll {
    width: 30%;
    height: 8px;
    margin: 6px 0 12px;
    border-radius: 4px;
    background: #5f5f5f;
}

/* Tabs */
.tabs-bar {
    display: flex;
    height: 49px;
    border-radius: 12px 12px 0 0;
    background: #464648;
}

.crumbs {
    display: flex;
    align-items: center;
    gap: 11px;
    width: 182px;
    padding-left: 18px;
    border-right: 1px solid #232323;
    color: #fff;
}

.crumbs a {
    color: #9a9a9b;
}

.crumbs a.on {
    color: #fff;
}

.tabs {
    display: flex;
    gap: 22px;
    padding-left: 18px;
    font-size: 20px;
    line-height: 47px;
    color: #b0b0b0;
    white-space: nowrap;
}

.tabs .active {
    border-bottom: 4px solid #a5da42;
    color: #fff;
    font-weight: 500;
}

.search {
    display: flex;
    align-items: center;
    width: 259px;
    height: 37px;
    margin: 5px 5px 0 auto;
    padding: 0 9px 0 12px;
    border-radius: 10px;
    background: #232323;
    color: #fff;
}

.search input {
    flex: 1;
    min-width: 0;
    padding: 0;
    border: 0;
    outline: 0;
    background: none;
    color: #fff;
    font: inherit;
}

.search input::placeholder {
    color: #c8c8c8;
}

.search svg {
    width: 19px;
    height: 19px;
}

/* Sport filters */
.filter-bar {
    display: flex;
    align-items: center;
    height: 63px;
    padding-bottom: 2px;
    background: #232323;
    color: #b0b0b0;
    white-space: nowrap;
}

.stream {
    display: flex;
    align-items: center;
    gap: 11px;
    align-self: stretch;
    padding: 0 10px 0 12px;
    border-right: 1px solid #1a1a1a;
    color: #f2f2f2;
    font-size: 20px;
}

.switch {
    appearance: none;
    width: 52px;
    height: 24px;
    margin: 0;
    border-radius: 12px;
    background: radial-gradient(circle at 12px 12px, #464648 12px, #e0e0e0 13px);
}

.filters {
    display: flex;
    gap: 24px;
    padding: 0 23px 0 18px;
    font-weight: 700;
}

.filters a {
    display: flex;
    align-items: center;
    gap: 11px;
}

.filter-more {
    display: flex;
    align-items: center;
    gap: 6px;
    height: 38px;
    margin-right: 24px;
    padding-right: 22px;
    border-right: 1px solid #464648;
}

/* Matches */
.matches {
    width: 100%;
    table-layout: fixed;
    border-collapse: collapse;
    background: #fff;
}

.c-out {
    width: 108px;
}

.c-mid {
    width: 101px;
}

.c-more {
    width: 111px;
}

.league {
    height: 75px;
    background: #e0e0e0;
}

.league th {
    padding: 7px 6px;
    font-weight: 400;
    line-height: 21px;
}

.league th.first {
    padding-left: 12px;
}

.league th.last {
    padding-right: 12px;
}

.league-name {
    display: flex;
    align-items: center;
    padding-left: 12px;
    font-size: 21px;
}

.league-name .icon + .icon {
    margin: 0 13px 0 24px;
}

.drop {
    display: block;
    width: 25px;
    height: 20px;
    margin: 2px auto 0;
    border-radius: 10px;
    background: #707070;
    color: #fff;
}

.drop svg {
    width: 13px;
    height: 8px;
    margin: 0 auto;
}

.match {
    height: 121px;
}

.match td {
    padding: 0 6px;
    text-align: center;
}

.match td:first-child {
    padding: 7px 0 0 18px;
    vertical-align: top;
    text-align: left;
}

.match td.first {
    padding-left: 12px;
    border-left: 1px solid #e0e0e0;
}

.match td.last {
    padding-right: 12px;
}

.match td.more {
    border-left: 1px solid #e0e0e0;
}

.more a {
    text-decoration: underline;
}

.match-info {
    display: flex;
    align-items: center;
    height: 74px;
}

.marks {
    display: flex;
    flex-direction: column;
    align-items: center;
    justify-content: space-between;
    width: 25px;
    height: 56px;
    margin-right: 11px;
}

.marks button {
    color: #a5a5a8;
}

.marks .fav {
    color: #a5da42;
}

.pin {
    width: 25px;
    height: 25px;
}

.bar {
    width: 1px;
    height: 49px;
    background: #dcdcdc;
}

.teams {
    flex: 1;
    padding-left: 14px;
    font-size: 21px;
}

.teams a {
    display: flex;
    align-items: center;
    gap: 11px;
    height: 37px;
}

.score {
    display: flex;
    flex-direction: column;
    width: 45px;
    padding-left: 12px;
    line-height: 37px;
}

.score:has(b) {
    width: 26px;
    padding-left: 0;
}

.meta {
    display: flex;
    align-items: center;
    gap: 12px;
    padding-right: 20px;
    font-size: 17px;
    line-height: 32px;
}

.meta svg {
    width: 18px;
    height: 18px;
}

.meta button {
    margin: 12px 0 0 auto;
}

.meta .chev-small {
    width: 15px;
    height: 10px;
}

.odd {
    width: 100%;
    height: 48px;
    border-radius: 10px;
    background: #e9e9e9;
}

.total {
    border-bottom: 2px dashed #555;
}
```
